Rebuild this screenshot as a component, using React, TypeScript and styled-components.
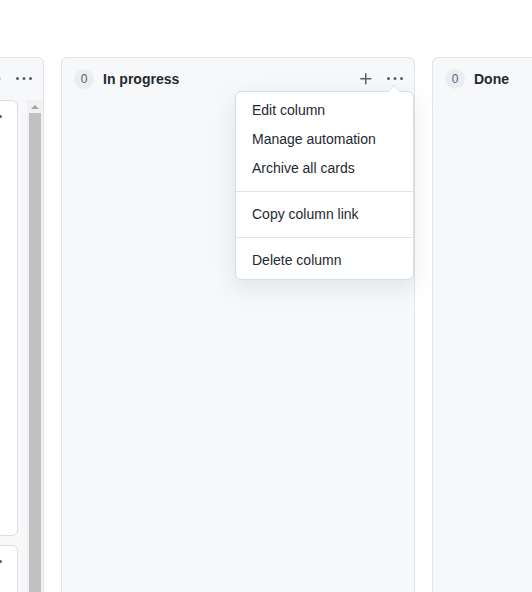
import styled, { createGlobalStyle } from "styled-components";

const GlobalStyle = createGlobalStyle`
  html, body {
    margin: 0;
    padding: 0;
    background: #ffffff;
    overflow: hidden;
  }
  body {
    font-family: "Liberation Sans", Arial, sans-serif;
    color: #24292f;
  }
  * {
    box-sizing: border-box;
  }
`;

const Board = styled.div`
  display: flex;
  gap: 17px;
  padding-top: 57px;
  margin-left: -310px;
  height: 592px;
`;

const Column = styled.div`
  position: relative;
  flex: 0 0 354px;
  height: 600px;
  display: flex;
  flex-direction: column;
  background: #f6f8fa;
  border: 1px solid #e1e4e8;
  border-radius: 6px;
`;

const Header = styled.div`
  display: flex;
  align-items: center;
  height: 42px;
  padding: 0 11px 0 12px;
  gap: 9px;
`;

const Counter = styled.span`
  display: inline-flex;
  align-items: center;
  justify-content: center;
  width: 20px;
  height: 20px;
  border-radius: 50%;
  background: #eaeef2;
  color: #57606a;
  font-size: 12px;
`;

const Title = styled.span`
  flex: 1;
  font-size: 14px;
  font-weight: 700;
  color: #24292f;
`;

const Actions = styled.div`
  display: flex;
  align-items: center;
  gap: 13px;
  margin-left: auto;
  color: #57606a;
`;

const Content = styled.div`
  flex: 1;
  display: flex;
  gap: 9px;
  min-height: 0;
`;

const CardList = styled.div`
  flex: 1;
  display: flex;
  flex-direction: column;
  gap: 9px;
`;

const Card = styled.div<{ $height: number }>`
  flex: 0 0 ${p => p.$height}px;
  display: flex;
  justify-content: flex-end;
  padding: 8px 15px 0 0;
  background: #ffffff;
  border: 1px solid #d8dee4;
  border-radius: 6px;
  color: #57606a;
`;

const Scrollbar = styled.div`
  width: 16px;
  display: flex;
  flex-direction: column;
  background: #f1f1f1;
`;

const ScrollArrow = styled.div`
  height: 13px;
  display: flex;
  align-items: center;
  justify-content: center;
  &::before {
    content: "";
    border-left: 4px solid transparent;
    border-right: 4px solid transparent;
    border-bottom: 4px solid #a3a3a3;
  }
`;

const ScrollThumb = styled.div`
  flex: 1;
  margin: 0 2px;
  background: #c1c1c1;
`;

const Menu = styled.div`
  position: absolute;
  top: 33px;
  right: 0;
  width: 179px;
  padding: 4px 0;
  background: #ffffff;
  border: 1px solid #d8dee4;
  border-radius: 6px;
  box-shadow: 0 8px 24px rgba(140, 149, 159, 0.2);
  z-index: 10;

  &::before,
  &::after {
    content: "";
    position: absolute;
    right: 12px;
    border: 7px solid transparent;
  }
  &::before {
    top: -14px;
    border-bottom-color: #d8dee4;
  }
  &::after {
    top: -13px;
    border-bottom-color: #ffffff;
  }
`;

const MenuItem = styled.div`
  padding: 4px 8px 4px 16px;
  font-size: 14px;
  line-height: 21px;
  color: #24292f;
  white-space: nowrap;
`;

const Divider = styled.div`
  height: 1px;
  margin: 8px 0;
  background: #e1e4e8;
`;

const PlusIcon = () => (
  <svg width="16" height="16" viewBox="0 0 16 16" fill="currentColor">
    <path d="M7.75 2a.75.75 0 0 1 .75.75V7h4.25a.75.75 0 0 1 0 1.5H8.5v4.25a.75.75 0 0 1-1.5 0V8.5H2.75a.75.75 0 0 1 0-1.5H7V2.75A.75.75 0 0 1 7.75 2Z" />
  </svg>
);

const KebabIcon = () => (
  <svg width="16" height="16" viewBox="0 0 16 16" fill="currentColor">
    <path d="M8 9a1.5 1.5 0 1 0 0-3 1.5 1.5 0 0 0 0 3ZM1.5 9a1.5 1.5 0 1 0 0-3 1.5 1.5 0 0 0 0 3Zm13 0a1.5 1.5 0 1 0 0-3 1.5 1.5 0 0 0 0 3Z" />
  </svg>
);

const ColumnHeader = ({ count, title }: { count?: number; title?: string }) => (
  <Header>
    {count !== undefined && <Counter>{count}</Counter>}
    {title && <Title>{title}</Title>}
    <Actions>
      <PlusIcon />
      <KebabIcon />
    </Actions>
  </Header>
);

export default function App() {
  return (
    <>
      <GlobalStyle />
      <Board>
        <Column>
          {/* column title sits off-screen to the left */}
          <ColumnHeader />
          <Content>
            <CardList>
              <Card $height={436}>
                <KebabIcon />
              </Card>
              <Card $height={120}>
                <KebabIcon />
              </Card>
            </CardList>
            <Scrollbar>
              <ScrollArrow />
              <ScrollThumb />
            </Scrollbar>
          </Content>
        </Column>

        <Column>
          <ColumnHeader count={0} title="In progress" />
          <Menu>
            <MenuItem>Edit column</MenuItem>
            <MenuItem>Manage automation</MenuItem>
            <MenuItem>Archive all cards</MenuItem>
            <Divider />
            <MenuItem>Copy column link</MenuItem>
            <Divider />
            <MenuItem>Delete column</MenuItem>
          </Menu>
        </Column>

        <Column>
          <ColumnHeader count={0} title="Done" />
        </Column>
      </Board>
    </>
  );
}
